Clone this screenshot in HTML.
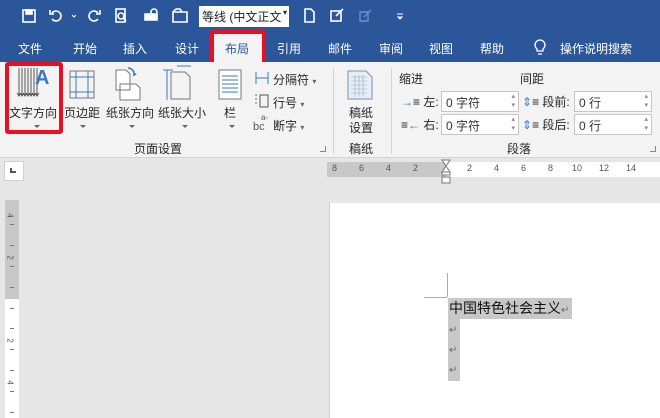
<!DOCTYPE html>
<html><head><meta charset="utf-8"><style>
*{margin:0;padding:0;box-sizing:border-box}
body{width:660px;height:418px;overflow:hidden;background:#e6e6e6;font-family:"Liberation Sans","Noto Sans CJK SC",sans-serif;position:relative;font-size:12px;color:#333}
.a{position:absolute;white-space:nowrap}
.w{color:#fff;font-size:12px}
.t{font-size:12px;color:#262626}
.arr{position:absolute;width:0;height:0;border-left:3px solid transparent;border-right:3px solid transparent;border-top:3px solid #666}
.spin{position:absolute;background:#fff;border:1px solid #c6c6c6;height:21px;width:78px;font-size:12px;padding:2px 0 0 4px;color:#333}
.spin:after{content:"▴\A▾";white-space:pre;position:absolute;right:3px;top:0;font-size:7px;line-height:9px;color:#888}
.tk{position:absolute;left:10px;width:4px;height:1px;background:#777}
</style></head><body>
<div class="a" style="left:0;top:0;width:660px;height:62px;background:#2b579a"></div>
<svg class="a" style="left:0;top:0" width="420" height="34">
<g fill="none" stroke="#fff" stroke-width="1.6">
<rect x="23" y="10" width="12" height="12"/><rect x="26" y="10" width="6" height="4" fill="#fff"/>
<path d="M52 13a5 5 0 1 1 0 6M50 10v4h4"/><path d="M72 15l2 2 2-2" stroke-width="1"/>
<path d="M98 13a5 5 0 1 0 0 6M100 10v4h-4"/>
<rect x="116" y="9" width="9" height="13"/><circle cx="121" cy="16" r="3"/><path d="M123 18l3 3"/>
<path d="M145 14h12v6h-12z" fill="#fff"/><circle cx="154" cy="12" r="3"/>
<path d="M173 12h14v10h-14zM173 12l3-3h4l2 3"/>
<path d="M305 9h6l3 3v10h-9z"/>
<rect x="331" y="11" width="10" height="10"/><path d="M336 16l7-7"/>
</g>
<g fill="none" stroke="#6e8fc4" stroke-width="1.4"><path d="M360 12h8v9h-8z M364 17l7-7"/></g>
<path d="M397 14h6M398 17l2 2 2-2z" stroke="#fff" fill="#fff"/>
</svg>
<div class="a" style="left:199px;top:6px;width:90px;height:21px;background:#fff;font-size:12px;padding:2px 3px;color:#222;overflow:hidden">等线 (中文正文<span style="position:absolute;right:0;top:2px;background:#fff;padding:0 2px;font-size:8px">▾</span></div>
<div class="a" style="left:210px;top:30px;width:56px;height:36px;border:4px solid #e81123;border-radius:3px;background:#f3f3f3"></div>
<div class="a w" style="left:18px;top:40px">文件</div>
<div class="a w" style="left:73px;top:40px">开始</div>
<div class="a w" style="left:123px;top:40px">插入</div>
<div class="a w" style="left:175px;top:40px">设计</div>
<div class="a" style="left:225px;top:40px;color:#2b579a">布局</div>
<div class="a w" style="left:277px;top:40px">引用</div>
<div class="a w" style="left:328px;top:40px">邮件</div>
<div class="a w" style="left:379px;top:40px">审阅</div>
<div class="a w" style="left:429px;top:40px">视图</div>
<div class="a w" style="left:480px;top:40px">帮助</div>
<svg class="a" style="left:533px;top:39px" width="14" height="18"><path d="M4 12v-2a5 5 0 1 1 6 0v2zM5 15h4" fill="none" stroke="#fff" stroke-width="1.3"/></svg>
<div class="a w" style="left:560px;top:40px">操作说明搜索</div>
<div class="a" style="left:0;top:62px;width:660px;height:96px;background:#f3f3f3;border-bottom:1px solid #d4d4d4"></div>
<div class="a" style="left:5px;top:62px;width:58px;height:72px;border:4px solid #e81123;border-radius:3px"></div>
<svg class="a" style="left:0;top:62px" width="330" height="45">
<g stroke="#555" stroke-width="1" fill="none">
<path d="M19 6v27M22 6v27M25 6v27M28 6v27M31 6v27M34 6v27M37 6v27"/>
<path d="M17 31l2 3 2-3M20 31l2 3 2-3M23 31l2 3 2-3M26 31l2 3 2-3M29 31l2 3 2-3M32 31l2 3 2-3M35 31l2 3 2-3"/>
<rect x="70" y="9" width="24" height="27" stroke="#777"/><path d="M76 9v27M88 9v27M70 15h24M70 30h24" stroke="#3b78c4"/>
<path d="M116 8h10l4 4v16h-14z M120 22h16l4 4v12h-20z" fill="#fff" stroke="#777"/><path d="M128 6a6 6 0 0 1 6 7l2-1" stroke="#3b78c4" stroke-width="1.6"/>
<path d="M171 10h14l5 5v22h-19z" stroke="#777"/><path d="M167 8v30M163 8h10M177 4h14" stroke="#3b78c4"/>
<rect x="219" y="8" width="22" height="29" stroke="#777" fill="#fff"/><path d="M222 14h16M222 18h16M222 22h16M222 26h16M222 30h16" stroke="#3b78c4"/>
</g>
<text x="35" y="22" font-family="Liberation Sans" font-weight="bold" font-size="20" fill="#3b78c4">A</text>
</svg>
<div class="a t" style="left:9px;top:104px">文字方向</div>
<div class="a t" style="left:64px;top:104px">页边距</div>
<div class="a t" style="left:106px;top:104px">纸张方向</div>
<div class="a t" style="left:158px;top:104px">纸张大小</div>
<div class="a t" style="left:224px;top:104px">栏</div>
<div class="arr" style="left:34px;top:125px"></div><div class="arr" style="left:80px;top:125px"></div><div class="arr" style="left:129px;top:125px"></div><div class="arr" style="left:182px;top:125px"></div><div class="arr" style="left:229px;top:125px"></div>
<svg class="a" style="left:252px;top:70px" width="22" height="64"><g stroke="#555" fill="none"><path d="M4 2v12M16 2v12M4 8h12" stroke="#3b78c4"/><path d="M8 25h8v12h-8z"/><path d="M3 25h2M3 29h2M3 33h2" stroke="#3b78c4"/></g><text x="1" y="60" font-size="11" fill="#555">bc</text><text x="9" y="50" font-size="8" fill="#555">a-</text></svg>
<div class="a t" style="left:273px;top:71px">分隔符 <span style="font-size:8px;color:#666">▾</span></div>
<div class="a t" style="left:273px;top:94px">行号 <span style="font-size:8px;color:#666">▾</span></div>
<div class="a t" style="left:273px;top:117px">断字 <span style="font-size:8px;color:#666">▾</span></div>
<div class="a t" style="left:134px;top:140px">页面设置</div>
<div class="a" style="left:320px;top:146px;width:6px;height:6px;border-right:1px solid #888;border-bottom:1px solid #888"></div>
<div class="a" style="left:333px;top:68px;width:1px;height:86px;background:#d4d4d4"></div>
<svg class="a" style="left:346px;top:70px" width="28" height="30"><path d="M2 1h18l6 6v22h-24z" fill="#e6eef8" stroke="#7a8fb0"/><path d="M5 7h16M5 11h16M5 15h16M5 19h16M5 23h16M9 5v22M13 5v22M17 5v22" stroke="#9ab" stroke-width=".6"/></svg>
<div class="a t" style="left:349px;top:104px">稿纸</div>
<div class="a t" style="left:349px;top:119px">设置</div>
<div class="a t" style="left:349px;top:140px">稿纸</div>
<div class="a" style="left:391px;top:68px;width:1px;height:86px;background:#d4d4d4"></div>
<div class="a t" style="left:399px;top:70px">缩进</div>
<div class="a t" style="left:520px;top:70px">间距</div>
<div class="a t" style="left:401px;top:93px"><span style="color:#3b78c4">→</span>≡ 左:</div>
<div class="a t" style="left:401px;top:116px">≡<span style="color:#3b78c4">←</span> 右:</div>
<div class="spin" style="left:441px;top:91px">0 字符</div>
<div class="spin" style="left:441px;top:114px">0 字符</div>
<div class="a t" style="left:522px;top:93px"><span style="color:#3b78c4">⇕</span>≡ 段前:</div>
<div class="a t" style="left:522px;top:116px"><span style="color:#3b78c4">⇕</span>≡ 段后:</div>
<div class="spin" style="left:574px;top:91px">0 行</div>
<div class="spin" style="left:574px;top:114px">0 行</div>
<div class="a t" style="left:507px;top:140px">段落</div>
<div class="a" style="left:650px;top:146px;width:6px;height:6px;border-right:1px solid #888;border-bottom:1px solid #888"></div>
<div class="a" style="left:4px;top:161px;width:20px;height:20px;background:#fff;border:1px solid #d0d0d0"></div>
<div class="a" style="left:10px;top:168px;width:6px;height:5px;border-left:2px solid #555;border-bottom:2px solid #555"></div>
<div class="a" style="left:327px;top:162px;width:119px;height:15px;background:#c8c8c8"></div>
<div class="a" style="left:446px;top:162px;width:214px;height:15px;background:#fff"></div>
<div class="a" style="left:327px;top:163px;font-size:9px;color:#555">
<span class="a" style="left:5px">8</span><span class="a" style="left:32px">6</span><span class="a" style="left:59px">4</span><span class="a" style="left:86px">2</span><span class="a" style="left:140px">2</span><span class="a" style="left:167px">4</span><span class="a" style="left:194px">6</span><span class="a" style="left:221px">8</span><span class="a" style="left:245px">10</span><span class="a" style="left:272px">12</span><span class="a" style="left:299px">14</span></div>
<svg class="a" style="left:440px;top:159px" width="12" height="26"><path d="M2 1h8l-4 6zM2 13l4-6 4 6zM2 13h8v3h-8zM2 18h8v6h-8z" fill="#fff" stroke="#777"/></svg>
<div class="a" style="left:5px;top:200px;width:14px;height:99px;background:#c8c8c8"></div>
<div class="a" style="left:5px;top:299px;width:14px;height:119px;background:#fff"></div>
<div class="a" style="left:0;top:0;width:24px;height:418px">
<div class="a" style="left:8px;top:211px;font-size:8px;color:#555;transform:rotate(90deg)">4</div>
<div class="tk" style="top:224px"></div><div class="tk" style="top:245px"></div>
<div class="a" style="left:8px;top:253px;font-size:8px;color:#555;transform:rotate(90deg)">2</div>
<div class="tk" style="top:266px"></div><div class="tk" style="top:287px"></div>
<div class="tk" style="top:308px"></div><div class="tk" style="top:328px"></div>
<div class="a" style="left:8px;top:336px;font-size:8px;color:#555;transform:rotate(90deg)">2</div>
<div class="tk" style="top:349px"></div><div class="tk" style="top:370px"></div>
<div class="a" style="left:8px;top:378px;font-size:8px;color:#555;transform:rotate(90deg)">4</div>
<div class="tk" style="top:391px"></div><div class="tk" style="top:412px"></div>
</div>
<div class="a" style="left:329px;top:203px;width:331px;height:215px;background:#fff;border-left:1px solid #d0d0d0"></div>
<div class="a" style="left:447px;top:273px;width:1px;height:24px;background:#aaa"></div>
<div class="a" style="left:424px;top:297px;width:23px;height:1px;background:#aaa"></div>
<div class="a" style="left:448px;top:298px;width:124px;height:21px;background:#c8c8c8"></div>
<div class="a" style="left:448px;top:319px;width:12px;height:62px;background:#c8c8c8"></div>
<div class="a" style="left:449px;top:299px;font-size:14px;color:#111;font-family:'Noto Sans CJK SC',sans-serif;line-height:19px">中国特色社会主义<span style="font-size:10px;color:#666">↵</span></div>
<div class="a" style="left:449px;top:321px;font-size:10px;color:#666;line-height:20px">↵<br>↵<br>↵</div>
</body></html>
